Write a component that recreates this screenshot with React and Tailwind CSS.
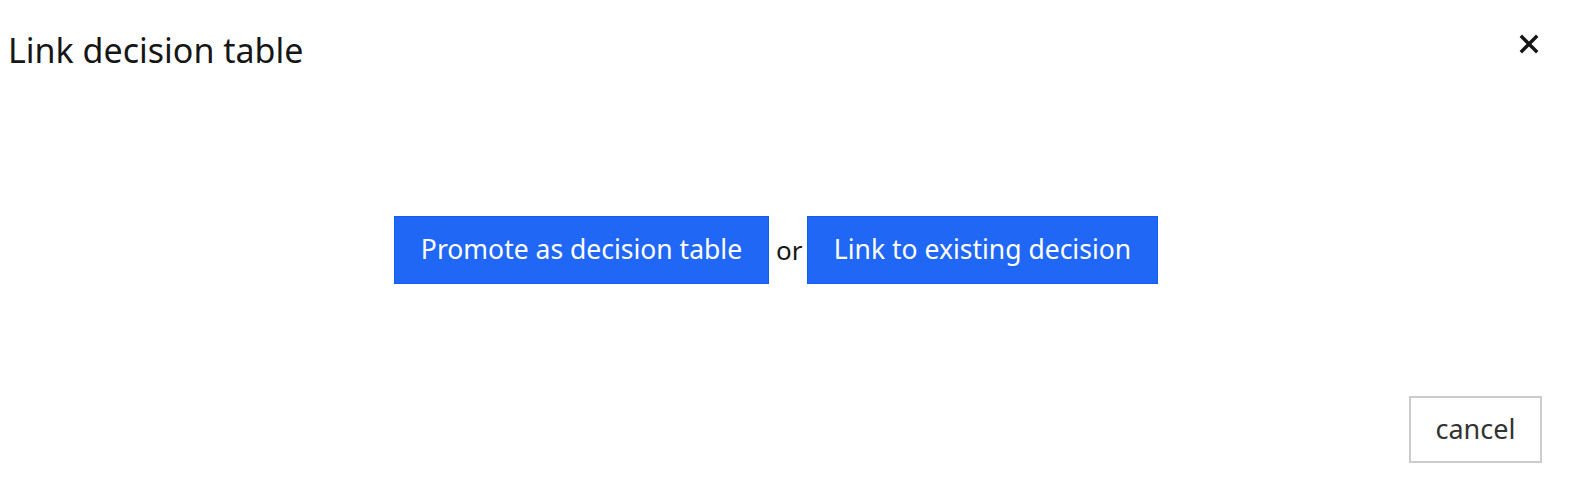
export default function App() {
  return (
    <div className="w-[1574px] h-[486px] bg-white flex flex-col" style={{ fontFamily: '"Noto Sans", "Open Sans", sans-serif' }}>
      <div className="flex items-start justify-between pl-[8px] pr-[35px] pt-[28px]">
        <h1 className="text-[34px] leading-[44px] text-[#161616] font-normal">Link decision table</h1>
        <button className="mt-[6px] text-[#161616]" aria-label="close">
          <svg width="20" height="20" viewBox="0 0 20 20">
            <path d="M3 3 L17 17 M17 3 L3 17" stroke="#161616" strokeWidth="3.4" strokeLinecap="square" />
          </svg>
        </button>
      </div>
      <div className="flex-1 flex items-start justify-center pt-[144px]">
        <div className="flex items-center gap-[7px] ml-[-22px]">
          <button className="h-[68px] w-[375px] bg-[#2067f6] border border-[#125ef0] text-white text-[26.5px]">Promote as decision table</button>
          <span className="text-[26px] text-[#161616] w-[24px] text-center">or</span>
          <button className="h-[68px] w-[351px] bg-[#2067f6] border border-[#125ef0] text-white text-[26.5px]">Link to existing decision</button>
        </div>
      </div>
      <div className="flex justify-end pr-[32px] pb-[23px]">
        <button className="h-[67px] w-[133px] border-2 border-[#cccccc] bg-white text-[#333333] text-[27px]">cancel</button>
      </div>
    </div>
  );
}
